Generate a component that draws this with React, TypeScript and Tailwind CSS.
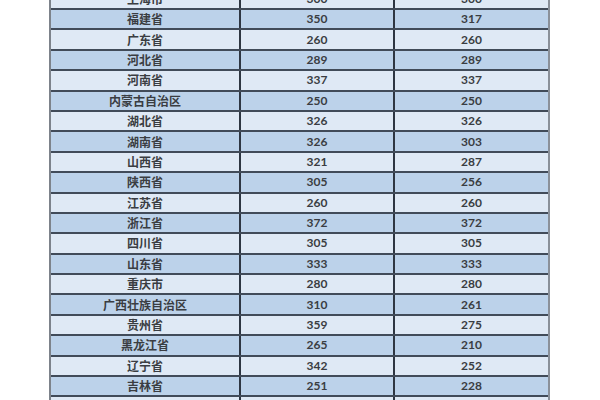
const rows: [string, string, string][] = [
  ["上海市", "300", "300"],
  ["福建省", "350", "317"],
  ["广东省", "260", "260"],
  ["河北省", "289", "289"],
  ["河南省", "337", "337"],
  ["内蒙古自治区", "250", "250"],
  ["湖北省", "326", "326"],
  ["湖南省", "326", "303"],
  ["山西省", "321", "287"],
  ["陕西省", "305", "256"],
  ["江苏省", "260", "260"],
  ["浙江省", "372", "372"],
  ["四川省", "305", "305"],
  ["山东省", "333", "333"],
  ["重庆市", "280", "280"],
  ["广西壮族自治区", "310", "261"],
  ["贵州省", "359", "275"],
  ["黑龙江省", "265", "210"],
  ["辽宁省", "342", "252"],
  ["吉林省", "251", "228"],
  ["", "", ""],
];

export default function App() {
  return (
    <div className="w-[600px] h-[400px] overflow-hidden bg-white">
      <div className="ml-[49px] mt-[-10.4px] w-[501px] border-l-2 border-r-2 border-l-[#7d838b] border-r-[#8a9099]">
        {rows.map(([name, a, b], i) => (
          <div
            key={i}
            className={`grid grid-cols-[190px_154px_153px] h-[20.4px] border-b-2 border-[#414b59] text-[12px] text-[#3a3d42] ${
              i % 2 === 1 ? "bg-[#bcd2ea]" : "bg-[#dfe9f5]"
            }`}
          >
            <div className="flex items-center justify-center border-r-2 border-[#2e3642] font-bold font-['Noto_Sans_CJK_SC',sans-serif] leading-none">
              {name}
            </div>
            <div className="flex items-center justify-center border-r-2 border-[#2e3642] font-bold font-['Lato','Liberation_Sans',sans-serif] leading-none">
              {a}
            </div>
            <div className="flex items-center justify-center font-bold font-['Lato','Liberation_Sans',sans-serif] leading-none">
              {b}
            </div>
          </div>
        ))}
      </div>
    </div>
  );
}
